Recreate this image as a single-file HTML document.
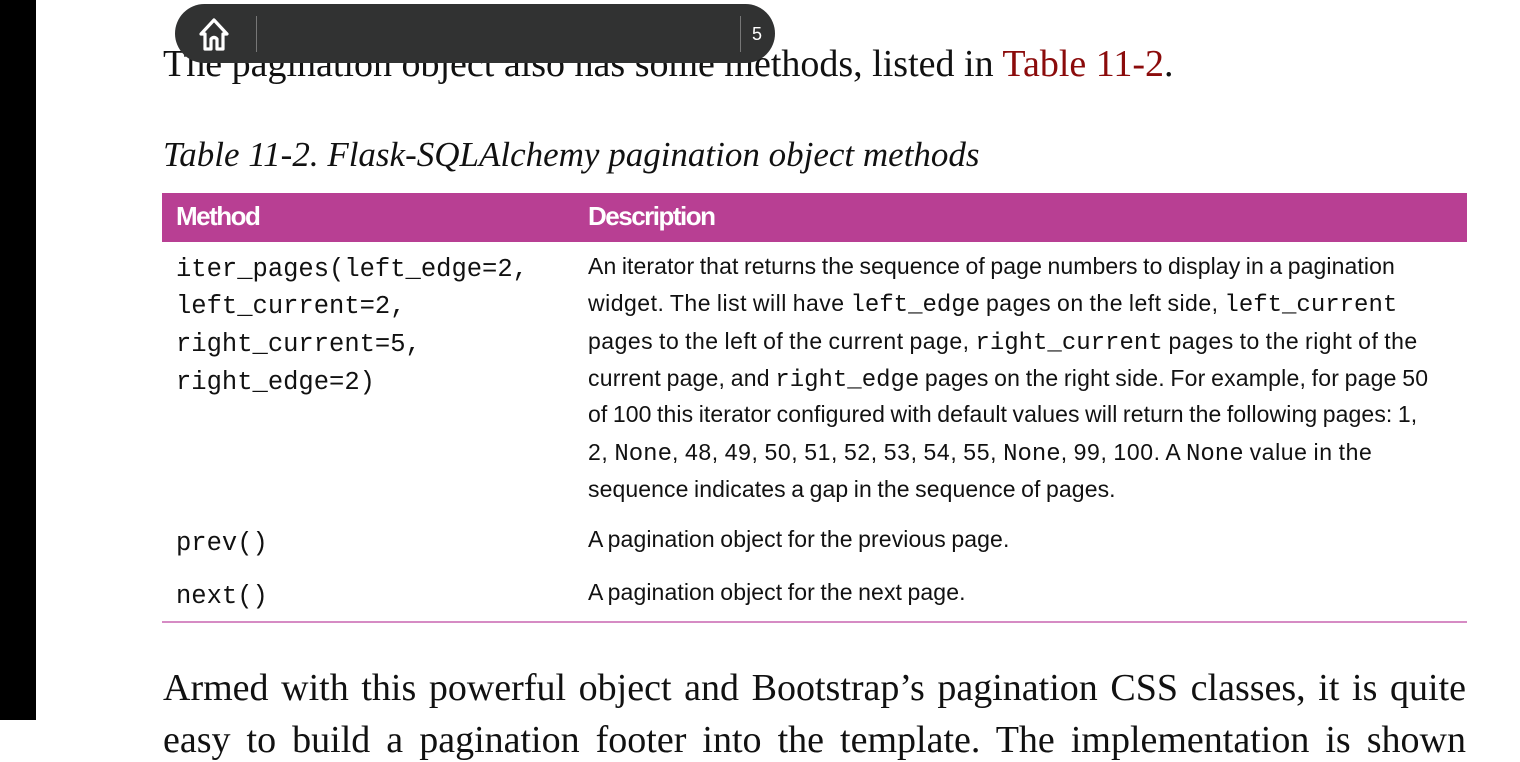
<!DOCTYPE html>
<html><head><meta charset="utf-8"><style>
body{margin:0;width:1520px;height:720px;background:#fff;position:relative;overflow:hidden;font-family:"Liberation Serif",serif;color:#111}
.l{position:absolute;white-space:nowrap}
.serif{font-size:38px;line-height:44px}
.desc{font-family:"Liberation Sans",sans-serif;font-size:23px;letter-spacing:0.1px;word-spacing:-1px;color:#111}
.desc code,.mono{font-family:"Liberation Mono",monospace;letter-spacing:0;word-spacing:0}
.desc code{font-size:24px}
.mono{font-size:25.5px;color:#111}
</style></head><body>
<div style="position:absolute;left:0;top:0;width:36px;height:720px;background:#000"></div>
<div class="l serif" style="left:163px;top:42px">The pagination object also has some methods, listed in <span style="color:#8b0b0b">Table 11-2</span>.</div>
<div class="l serif" style="left:163px;top:133px;font-style:italic;font-size:35px">Table 11-2. Flask-SQLAlchemy pagination object methods</div>
<div style="position:absolute;left:162px;top:193px;width:1305px;height:49px;background:#b83f93"></div>
<div class="l" style="left:176px;top:201px;font-family:'Liberation Sans',sans-serif;font-weight:bold;font-size:26px;color:#fff;letter-spacing:-1.5px">Method</div>
<div class="l" style="left:588px;top:201px;font-family:'Liberation Sans',sans-serif;font-weight:bold;font-size:26px;color:#fff;letter-spacing:-1.5px">Description</div>
<div class="l mono" style="left:176px;top:255px">iter_pages(left_edge=2,</div>
<div class="l mono" style="left:176px;top:292px">left_current=2,</div>
<div class="l mono" style="left:176px;top:330px">right_current=5,</div>
<div class="l mono" style="left:176px;top:368px">right_edge=2)</div>
<div class="l desc" style="left:588px;top:253px">An iterator that returns the sequence of page numbers to display in a pagination</div>
<div class="l desc" style="left:588px;top:290px;letter-spacing:0.5px">widget. The list will have <code>left_edge</code> pages on the left side, <code>left_current</code></div>
<div class="l desc" style="left:588px;top:328px;letter-spacing:0.5px">pages to the left of the current page, <code>right_current</code> pages to the right of the</div>
<div class="l desc" style="left:588px;top:365px;letter-spacing:0.2px">current page, and <code>right_edge</code> pages on the right side. For example, for page 50</div>
<div class="l desc" style="left:588px;top:401px">of 100 this iterator configured with default values will return the following pages: 1,</div>
<div class="l desc" style="left:588px;top:439px;letter-spacing:0.6px">2, <code>None</code>, 48, 49, 50, 51, 52, 53, 54, 55, <code>None</code>, 99, 100. A <code>None</code> value in the</div>
<div class="l desc" style="left:588px;top:476px">sequence indicates a gap in the sequence of pages.</div>
<div class="l mono" style="left:176px;top:529px">prev()</div>
<div class="l desc" style="left:588px;top:526px">A pagination object for the previous page.</div>
<div class="l mono" style="left:176px;top:582px">next()</div>
<div class="l desc" style="left:588px;top:579px">A pagination object for the next page.</div>
<div style="position:absolute;left:162px;top:621px;width:1305px;height:2px;background:#d68bc4"></div>
<div class="l serif" style="left:163px;top:666px;width:1303px;text-align:justify;text-align-last:justify;white-space:normal">Armed with this powerful object and Bootstrap’s pagination CSS classes, it is quite</div>
<div class="l serif" style="left:163px;top:718px;width:1303px;text-align:justify;text-align-last:justify;white-space:normal">easy to build a pagination footer into the template. The implementation is shown</div>
<div style="position:absolute;left:175px;top:4px;width:600px;height:59px;border-radius:30px;background:#313232"></div>
<svg style="position:absolute;left:193px;top:13px" width="42" height="42" viewBox="0 0 42 42"><path d="M8 21 L21 7 L34 21 L30 21 L30 36 L24 36 L24 26 Q21 23 18 26 L18 36 L12 36 L12 21 Z" fill="none" stroke="#fff" stroke-width="3.2" stroke-linejoin="round"/></svg>
<div style="position:absolute;left:256px;top:16px;width:1px;height:36px;background:#777"></div>
<div style="position:absolute;left:740px;top:16px;width:1px;height:36px;background:#777"></div>
<div class="l" style="left:752px;top:24px;font-family:'Liberation Sans',sans-serif;font-size:18px;color:#fff">5</div>
</body></html>
